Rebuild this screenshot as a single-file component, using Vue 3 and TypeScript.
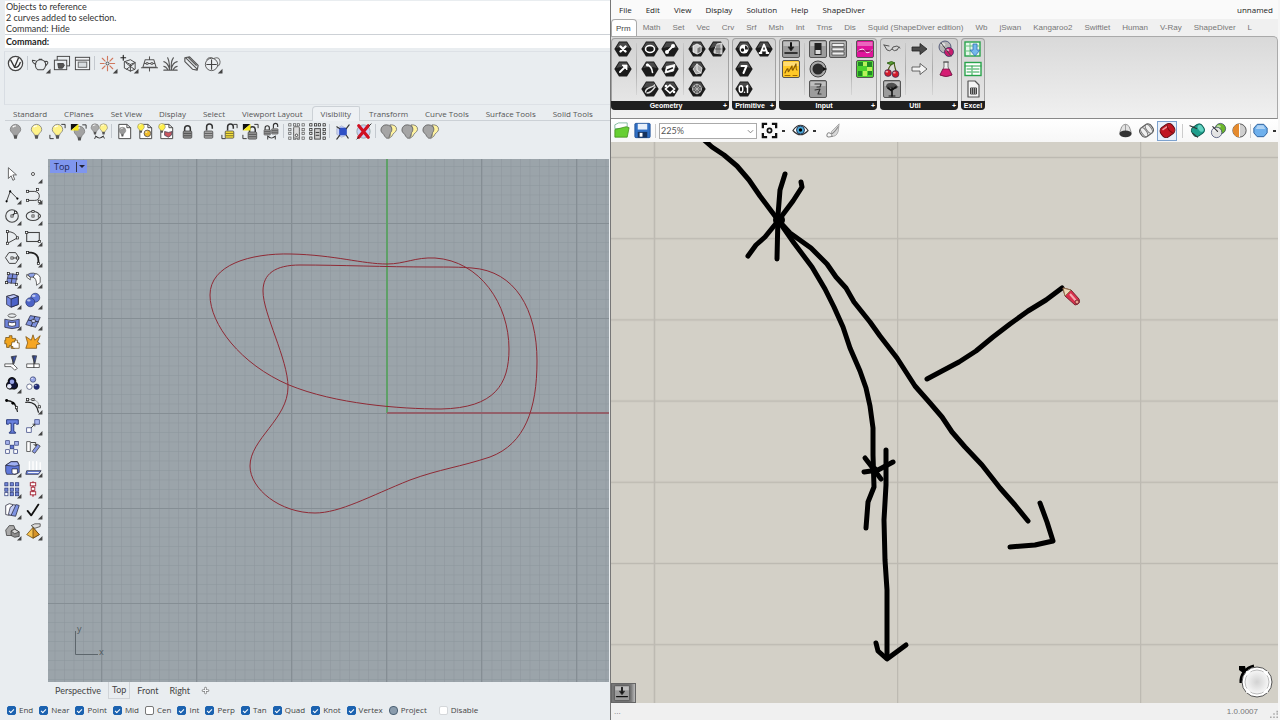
<script setup lang="ts">
import { h, ref } from 'vue'

interface Tool { name: string; more: boolean }

const hex = (glyph: string): string =>
  `<path d="M6 2.500h8l4.700 7.500-4.700 7.500H6L1.300 10z" fill="#1b1b1b"/><path d="M6.300 3.500h7.400l3 5.500q-7-2-13.400 0z" fill="#4a4a4a"/>${glyph}`
const tile = (glyph: string, fill = '#9c9c9c'): string =>
  `<rect x="1.500" y="1.500" width="17" height="17" rx="1.500" fill="${fill}" stroke="#555"/><path d="M2.500 3h15v4h-15z" fill="#fff" opacity=".35"/>${glyph}`
const bulb = (fill: string, x = 0, y = 0): string =>
  `<g transform="translate(${x} ${y})"><path d="M10 2.500a5.500 5.500 0 0 1 5.500 5.500c0 2.600-3 3.500-3.500 6H8c-.5-2.500-3.500-3.400-3.500-6A5.500 5.500 0 0 1 10 2.500z" fill="${fill}" stroke="#777" stroke-width=".8"/><path d="M7 5.500Q8.500 4 10.500 4.200" stroke="#fff" stroke-width="1.200" fill="none"/><path d="M8 14h4l-.6 3.600H8.600z" fill="#555"/></g>`
const lock = (fill: string, open = false): string =>
  `<path d="${open ? 'M8 9V5a3 3 0 0 1 6 0v2' : 'M7 10V7a3 3 0 0 1 6 0v3'}" fill="none" stroke="#333" stroke-width="1.600"/><rect x="5.500" y="9.500" width="9" height="7.500" rx="1" fill="${fill}" stroke="#444" stroke-width=".8"/><path d="M6 12h8M6 14.500h8" stroke="#222" stroke-width=".6"/>`
const brackets = '<path d="M14 2.500h4v4M2 13.500v4h4" fill="none" stroke="#333"/>'
const swap = '<path d="M2 2h8L2 9z" fill="#111"/><path d="M10 2v7H2z" fill="#f6e81c"/>'
const page = '<path d="M4 2.500h8.500L16.500 6v11.500H4z" fill="#fff" stroke="#444"/><path d="M12.500 2.500V6h4" fill="none" stroke="#444"/>'
const twoTone = '<path d="M8 3a5.500 5.500 0 0 0-6 5.500c0 3 3 3.500 4 6.500l2.500 2.500 2.500-2.500c.5-3 3-3.500 3-6.500a6 6 0 0 0-6-5.500z" fill="#a5a5a5" stroke="#555" stroke-width=".8"/><path d="M11.500 3q7-.5 7 5c-.5 3-4 3.500-5 7l-3.500 2.500q2.500-3 2-6 3.500-4-.5-8.500z" fill="#fff3a0" stroke="#666" stroke-width=".8"/>'
const node = (x: number, y: number): string =>
  `<rect x="${x - 1.2}" y="${y - 1.2}" width="2.400" height="2.400" fill="#fff" stroke="#222" stroke-width=".8"/>`
const box = (x: number, y: number, w: number, fill = '#a9b6ee'): string =>
  `<rect x="${x}" y="${y}" width="${w}" height="${w}" fill="${fill}" stroke="#2c3a7c" stroke-width=".8"/>`
const ball = (x: number, y: number, r: number, fill: string): string =>
  `<circle cx="${x}" cy="${y}" r="${r}" fill="${fill}" stroke="#28325e" stroke-width=".7"/><ellipse cx="${x - r / 3}" cy="${y - r / 2.5}" rx="${r / 2.5}" ry="${r / 4}" fill="#fff" opacity=".6"/>`
const line = (d: string, color = '#333', w = 1): string =>
  `<path d="${d}" fill="none" stroke="${color}" stroke-width="${w}" stroke-linecap="round" stroke-linejoin="round"/>`
const solid = (d: string, fill: string, stroke = '#333', w = 0.8): string =>
  `<path d="${d}" fill="${fill}" stroke="${stroke}" stroke-width="${w}" stroke-linejoin="round"/>`

const icons: Record<string, string> = {
  vray: '<circle cx="10" cy="10" r="7.500" fill="#f6f7f8" stroke="#444" stroke-width="1.300"/>' + line('M5 6.500 9 14 13 4.500M9 14q4 1 6-5', '#333', 1.4),
  teapot: line('M6 7.500q4-3 8 0c3 3 1 7-1 9H7c-3-2-3-6-1-9zM8.500 5.500h3M5 11Q1 9 1.500 6.500L4.500 7M14.500 8q4-1 3 2l-2.500 3', '#444', 1.1),
  frames: '<rect x="5.500" y="2.500" width="13" height="10" fill="#e9edf0" stroke="#444"/><rect x="2.500" y="6.500" width="13" height="10" fill="#e9edf0" stroke="#444"/>' + solid('M6 10h6l1 2-2 3H7z', '#555'),
  window: '<rect x="2.500" y="3.500" width="15" height="13" fill="#f2f4f6" stroke="#444"/><path d="M3 6.500h14" stroke="#444"/><rect x="5.500" y="8.500" width="9" height="5.500" fill="#d9dde0" stroke="#666"/>',
  sun: line('M10 2.500v4M10 13v4.500M2.500 10h4M13 10h4.500M4.500 4.500 7.500 7.500M15.500 4.500l-3 3M4.500 15.500l3-3M15.500 15.500l-3-3', '#d0775d', 1.2) + '<circle cx="10" cy="10" r="1.600" fill="#e9edf0" stroke="#444"/>',
  cubeadd: line('M2 4h5M4.500 1.500v5', '#222', 1.2) + line('M6 8l6-2 5 3v7l-5 2-6-3zM6 8l6 3 5-2M12 11v7M8 10l8 6M16 10l-8 6', '#444'),
  dome: line('M3 14 5.500 6h9L17 14zM1.500 14.500h17M10 3v3M10 14v4M5 10h10', '#555', 1.1) + '<path d="M6.500 9h2v2h-2zM11.500 9h2v2h-2z" fill="#ddd" stroke="#444" stroke-width=".7"/>',
  grass: line('M3 17h14M9 16Q7 9 3 8M9 16Q9 8 7 4M11 16Q10 8 13 4M11 16Q12 9 17 8M7 16Q5 13 3 13M13 16q2-3 4-3', '#555', 1.2),
  leaf: line('M3 4l5-1 9 9-1 5-5-1-8-8zM4 4l12 12M7 4l8 8', '#555', 1.2),
  spheres: line('M4 6q3-4 7-1 6-3 7 3 0 4-3 5', '#777', 1.1) + '<circle cx="9" cy="11" r="6.500" fill="#eceff2" stroke="#555"/>' + line('M9 6v10M4 11h10', '#444', 1.2),

  bulbOff: bulb('#a2a2a2'),
  bulbOn: bulb('#fff38a'),
  bulbSel: bulb('#fff38a') + brackets,
  bulbSwap: bulb('#a2a2a2', 1, 2) + swap + '<path d="M14 3h4v4" fill="none" stroke="#333"/>',
  bulbPair: '<g transform="scale(.75)">' + bulb('#aaa', -3, 0) + bulb('#fff38a', 9, 0) + '</g>' + line('M6 15q4 4 8 0M5 17.500l1-2.500 2 1M15 17l-1-2-2 1'),
  pageBulb: page + '<g transform="scale(.65)">' + bulb('#999', 2, 6) + '</g>',
  pageBox: page + '<g transform="scale(.65)">' + bulb('#fff04a', -2, 0) + '</g>' + ball(12, 12, 3.5, '#f0bc2a'),
  pageMesh: page + '<g transform="scale(.65)">' + bulb('#fff04a', -2, 0) + '</g>' + solid('M8 10l4 1 4-1-1 4-3 2-4-2z', '#c9565f', '#445'),
  lock: lock('#8f8f8f'),
  unlock: lock('#a9a9a9', true),
  unlockSel: lock('#f7e13c', true) + brackets,
  lockSwap: '<g transform="translate(2 1)">' + lock('#999') + '</g>' + swap + brackets,
  lockPair: '<g transform="translate(-2 1) scale(.75)">' + lock('#999') + '</g><g transform="translate(6 0) scale(.75)">' + lock('#999', true) + '</g>' + line('M6 15q4 4 8 0M6 18v-3l2 1M14 18v-3l-2 1'),
  cage: '<g opacity=".7">' + [3, 8, 12, 17].map(x => [3, 8, 12, 17].map(y => node(x, y)).join('')).join('') + '</g><rect x="7" y="5" width="6" height="12" rx="1" fill="#dcdcdc" stroke="#666"/><circle cx="10" cy="14" r="1.300" fill="#fff" stroke="#444"/>',
  cageOn: [3, 8, 12, 17].map(y => node(3, y) + node(17, y)).join('') + node(8, 3) + node(12, 3) + '<rect x="7" y="7" width="6" height="11" fill="#ccc" stroke="#444"/>' + line('M8.500 11h3M8.500 14h3'),
  blueBox: solid('M4 7l5-3 5 3v7l-5 2-5-3z', '#c9d2f8', '#a8b0c8') + '<rect x="6.500" y="6" width="8" height="8" rx="1" fill="#2f50c6"/>' + line('M14 7l3-4M7 14l-3 4M14 14l2 3M7 7 4 5', '#333', 1.2),
  redCross: '<circle cx="10" cy="10" r="7" fill="#c8d2f6" stroke="#9aa"/>' + line('M5 4l10 12M15 4 5 16', '#d01022', 3.4) + line('M16 4l2-2M5 16l-2 2', '#333'),
  twoTone,

  arrow: solid('M6 3v12l3-3 2 5 2-1-2-5h4z', '#fff'),
  point: '<circle cx="10" cy="10" r="1.700" fill="#fff" stroke="#444"/>',
  polyline: line('M4 17 8 6l8 8', '#444', 1.1) + '<circle cx="4" cy="17" r="1.200"/><circle cx="8" cy="6" r="1.200"/><circle cx="16" cy="14" r="1.200"/>',
  curve: line('M4 6h8q5 1 5 5 0 5-5 5H4', '#444', 1.1) + node(4, 6) + node(4, 16) + node(15, 4) + node(17, 17),
  circle: '<circle cx="10" cy="10" r="7" fill="none" stroke="#444" stroke-width="1.200"/>' + line('M10 10l4-4', '#222', 1.2) + node(10, 10) + node(14, 6),
  ellipse: '<ellipse cx="10" cy="10" rx="7.500" ry="5" fill="none" stroke="#444" stroke-width="1.200"/>' + node(10, 5) + node(10, 10) + node(17, 10),
  arc: line('M5 4v13l11-6M5 4q9 0 11 7', '#444', 1.1) + node(5, 4) + node(5, 17) + node(16, 11),
  rect: '<rect x="3" y="5" width="14" height="10" fill="none" stroke="#444" stroke-width="1.200"/>' + node(3, 5) + node(17, 15),
  polygon: line('M7 4h7l4 6-4 6H7l-4-6zM10 10h6', '#444', 1.1) + node(10, 10) + node(16, 10),
  fillet: line('M4 4h4q8 1 8 9v3', '#222', 2) + node(4, 4) + node(16, 16),
  surface: solid('M6 4l10 1-2 10-10-1z', '#7e90df', '#334') + line('M5 9l11 1M11 4 9 15', '#334') + node(6, 4) + node(16, 4) + node(4, 14) + node(15, 16),
  patch: solid('M4 5q7-4 13 2l-1 6q-3-6-9-5z', '#8fa2e8') + solid('M10 8q4 1 4 9l4-3V8q-2-4-5-4z', '#fff') + solid('M3 5l4 3v3L3 8z', '#fff'),
  cube: solid('M4 6l8-2 5 2v9l-8 3-5-3z', '#7286e2', '#223') + solid('M4 6l8-2 5 2-8 3z', '#bec8f8', '#223') + solid('M9 9l8-3v9l-8 3z', '#4b62c8', '#223'),
  balls: ball(12.5, 7.5, 5, '#5f77d8') + ball(7, 12.5, 5, '#4b63c6'),
  revolve: '<ellipse cx="10" cy="4" rx="4.500" ry="2" fill="none" stroke="#555"/>' + solid('M2 8q8 3 16 0v9q-8 3-16 0z', '#6e84dc', '#223') + solid('M6 11q4 2 8 0v4q-4 2-8 0z', '#fff', '#223'),
  plane: solid('M7 4l11 2-5 11L2 14z', '#7e92df', '#223') + line('M5 9l11 2M12 5 8 16', '#223') + solid('M9 8l4 1-1 3-4-1z', '#c9d1f8'),
  puzzle: solid('M3 5h4V3h3v3h4v4h2v3h-3v4h-4v-3H7v2H4v-4H2V8h1z', '#f1a51e', '#6b4a10') + solid('M10 10h3V8h3v3h2v6h-7v-2H9z', '#fff', '#6b4a10'),
  explode: solid('M2 17 4 11 2 4l6 4 2-6 2 6 6-5-3 7 3 2-4 1v4z', '#f6a623', '#754b0c'),
  trim: solid('M9 3l6-1-3 9z', '#3b52ac') + solid('M2 11h9l5 5-3 2-4-4H2z', '#fff') + line('M11 3v8'),
  split: solid('M9 2h5l-2 9z', '#3b52ac') + solid('M3 11h14v4H3z', '#fff') + line('M11 2v13'),
  join: solid('M10 3a4 4 0 0 1 4 5 4 4 0 1 1-4 7 4 4 0 1 1-4-7 4 4 0 0 1 4-5z', '#10143a', '#111', 1.4) + '<circle cx="10" cy="7.500" r="2.500" fill="#98a4e6"/><circle cx="7" cy="12.500" r="2.500" fill="#e8ebfa"/>',
  group: ball(10, 5, 3, '#9ba9e9') + ball(6, 13, 3, '#fff') + ball(14, 13, 3, '#1e2a78'),
  editPts: line('M4 5q10 0 12 12', '#222', 1.4) + '<circle cx="4" cy="5" r="1.600"/><circle cx="11" cy="8" r="1.600"/>' + node(15, 13),
  ctrlPts: line('M2 7q12-1 14 11', '#222', 1.4) + line('M3 4h8q6 2 6 9', '#888', 0.8) + node(4, 4) + node(10, 4) + node(17, 12),
  text: solid('M4 3h13v5h-2l-1-1h-2v9l2 1v1H7v-1l2-1V7H7L6 8H4z', '#6980dd', '#1c2c70', 1),
  move: box(12, 3, 5) + box(3, 12, 5, '#fff') + line('M8 12l4-4M10 8h2v2'),
  blocks: box(3, 3, 4) + box(13, 4, 4) + box(8, 8, 4, '#5d74d0') + box(3, 13, 4, '#fff') + box(12, 13, 4, '#fff'),
  rotate: solid('M3 4h4v11H3z', '#fff') + solid('M9 15l6-8 3 2-6 8z', '#8798e4') + line('M8 5h5v3M11 7l2 2 1-2'),
  boolean: solid('M3 7l6-4h7l2 4v8l-4 2H4l-1-3z', '#5f78da', '#223') + solid('M3 7l6-4h7l2 4-5 1z', '#9fb0f4', '#223') + solid('M10 11h6v5l-4 1-2-2z', '#fff', '#223'),
  project: line('M6 3v9M10 3v9M14 3v9M18 4v7', '#fff', 1.5) + solid('M3 13h16l-3 4H2z', '#6e86de', '#223') + line('M5 15h11', '#fff'),
  array: [2, 8, 14].map(x => [3, 9, 14].map(y => box(x, y, 3.5, x === 2 && y === 14 ? '#fff' : '#7286d6')).join('')).join(''),
  align: line('M10 2v16', '#b22233', 1.4) + [3, 8, 13].map(y => `<rect x="${y === 8 ? 8 : 7}" y="${y}" width="${y === 8 ? 4 : 6}" height="3.500" fill="#fff" stroke="#a22233"/>`).join(''),
  slabs: solid('M3 5l4-2 4 1-4 12-4-1z', '#fff', '#223') + solid('M10 6l5-2 3 1-4 12-5-1z', '#7e93e3', '#223') + solid('M8 7l4-3 2 1-5 11-3-1z', '#c5cdf4', '#223'),
  check: line('M4 11l4 5 8-12', '#111', 2),
  greyCubes: solid('M3 9l4-5h5l2 5-3 6H4z', '#aaa', '#333') + solid('M9 10l4-2 5 3v5l-5 1-4-2z', '#8c8c8c', '#333') + solid('M9 10l4-2 5 3-5 2z', '#d6d6d6', '#333'),
  pyramid: solid('M3 14l7-8 7 8-7 4z', '#f7c452', '#5a3f10') + solid('M10 6l7 8-7 4z', '#d6942a', '#5a3f10') + solid('M8 4l4-2h6v3l-6 2z', '#ddd'),

  hPoint: hex(line('M7.500 7.500l5 5M12.500 7.500l-5 5', '#fff', 2.4)),
  hVector: hex(line('M7 13l4-4', '#fff', 2) + solid('M9 6h5v5z', '#fff', '#fff')),
  hCircle: hex('<ellipse cx="10" cy="10" rx="4.500" ry="3.500" fill="none" stroke="#fff" stroke-width="1.600"/>'),
  hArc: hex(line('M7 5.500q5 2 5.500 8', '#fff', 1.6) + '<circle cx="7.500" cy="6" r="1.500" fill="#fff"/>'),
  hCurve: hex(line('M5.500 13q0-3 4.500-4.500T14.500 6M7 14q4 0 8-6', '#ddd', 1.4)),
  hLine: hex(line('M7 13l6-6', '#fff', 1.8) + '<circle cx="7" cy="13" r="2" fill="#fff"/><circle cx="13" cy="7" r="2" fill="#fff"/>'),
  hPlane: hex(solid('M6.500 7.500l8.500-2-1.500 6.500-8.500 2z', '#fff', '#fff') + line('M7.500 11l5-2', '#222', 1.4)),
  hRect: hex('<path d="M10 6l4.500 4-4.500 4-4.500-4z" fill="none" stroke="#fff" stroke-width="1.600"/><circle cx="6" cy="7" r="1.300" fill="#fff"/><circle cx="14" cy="13" r="1.300" fill="#fff"/>'),
  hBox: hex(solid('M6 7l4-2 4 2v6l-4 2-4-2z', '#ccc', '#fff') + solid('M10 9l4-2v6l-4 2z', '#777', '#ddd')),
  hBrep: hex(solid('M6 10l4-5 5 4-1 5-5 1z', '#aaa', '#eee') + line('M10 5v6l4 3', '#eee')),
  hMesh: hex('<circle cx="10" cy="10" r="4.500" fill="#555" stroke="#bbb"/>' + line('M7 7l6 6M13 7l-6 6M10 5v10M5.500 10h9', '#bbb', 0.8)),
  hTwisted: hex(solid('M7 12l3-7 5-1v11l-8-1z', '#bbb', '#eee') + line('M10 6v8M8 10h6M12 6v9', '#444', 0.7)),
  hBool: hex('<circle cx="10" cy="10" r="4.500" fill="#fff"/><circle cx="8.500" cy="11" r="1.700" fill="#111"/><path d="M11 6.500a4 4 0 0 1 3 4h-3z" fill="#222"/>'),
  hInt: hex(line('M7.500 7h5l-3 7', '#fff', 2)),
  hNum: hex('<ellipse cx="7" cy="10" rx="1.800" ry="3.300" fill="none" stroke="#fff" stroke-width="1.400"/><circle cx="10.500" cy="13.300" r=".8" fill="#fff"/>' + line('M12.500 8l1-1.500v7', '#fff', 1.5)),
  hText: hex(line('M6.500 14 10 5.500l3.500 8.500M8 11.500h4M5.500 14h2M12.500 14h2', '#fff', 1.8)),

  slider: tile(line('M4 14h12', '#111', 1.6) + line('M10 4v5', '#111', 2) + solid('M7 8h6l-3 4z', '#111')),
  graph: tile(line('M4 14q2-5 3-4 0 4 1 2l3-5q0 5 1 4l3-6q0 6 1 6', '#8a5c00', 1.2) + line('M4 16.500h5M12 16.500h4', '#a36c00'), '#ffc928'),
  toggle: tile('<rect x="6.500" y="4" width="7" height="12" fill="#222"/><rect x="7.500" y="11" width="5" height="4" fill="#ddd"/>'),
  list: tile('<path d="M4 4.500h12v3H4zM4 8.800h12v3H4zM4 13h12v3H4z" fill="#eee" stroke="#444" stroke-width=".7"/>'),
  knob: '<circle cx="10" cy="10" r="8" fill="#aaa" stroke="#444"/><circle cx="10" cy="10" r="5.500" fill="#2b2b2b"/><path d="M15 8l4 2-4 2z" fill="#111"/>',
  digits: tile(line('M7 5h6l-1 3H9M7 11l5-1-2 5h3', '#333', 1.2)),
  pink: tile(line('M3 12q5-4 7 0t7-1', '#fff') + '<path d="M3 12h14" stroke="#700a45"/>', '#e0149b'),
  pixels: tile('<path d="M3 3h5v4H3zM12 3h5v5h-5zM3 12h4v5H3zM13 12h4v4h-4z" fill="#1f8a25"/><path d="M8 3h4v4H8zM12 8h5v4h-5zM8 12h4v5H8z" fill="#b8f25b"/>', '#4cd22f'),
  glasses: line('M2 6l3 5q3 2 5-1 2 3 5 1M2 6l5 1M10 10l1-2 4-1 3 2M15 11l2-3', '#555', 1),
  cherries: line('M6 12q1-6 6-8 1 5 2 8', '#4b5a18', 1.2) + solid('M5 4q5-3 8 0-5 3-8 0z', '#5ba331', '#2d5b16') + ball(6, 14, 3.4, '#d31a2b') + ball(13.5, 15, 3.4, '#d31a2b'),
  tree: tile('<path d="M4 8q0-4 4-4 5-1 8 4l-2 2-4-1-4 1z" fill="#333" opacity=".8"/>' + line('M10 17V9M10 12 6 9M10 11l4-3', '#111', 1.6) + line('M7 17h6', '#111', 1), '#9a9a9a'),
  arrowFull: solid('M3 8h8V4.500l7 5.500-7 5.500V12H3z', '#4a4a4a', '#222'),
  arrowOpen: solid('M3 8h8V4.500l7 5.500-7 5.500V12H3z', '#f3f3f3', '#444'),
  colorBalls: ball(9, 8, 6, '#b5b5b5') + ball(13, 13, 4.5, '#c71d6d') + line('M5 4l10 13', '#444'),
  flask: solid('M8 3h4v5l4 8q-6 3-12 0l4-8z', '#eee', '#555') + solid('M7 10h6l3 6q-6 3-12 0z', '#d51d74', '#7b1044') + line('M7.500 3h5', '#555'),
  xlIn: '<rect x="2" y="3" width="15" height="14" fill="#e6f6ea" stroke="#28a34b" stroke-width="1.400"/>' + line('M2 7h15M2 12h15M7 3v14', '#66c27e') + solid('M10 5h4v6h3l-5 6-5-6h3z', '#74b8ec', '#2f71b3'),
  xlGrid: '<rect x="2" y="3.500" width="16" height="13" fill="#fff" stroke="#28a34b" stroke-width="1.400"/>' + line('M2 7h16M4 10h4M10 10h6M4 13h4M10 13h6', '#28a34b') + line('M9 7v9', '#28a34b'),
  sheet: solid('M5 2h7l4 4v12H5z', '#f4f4f4', '#555', 1.2) + '<path d="M7.500 9h6v6h-6zM9.500 9v6M11.500 9v6M7.500 11h6M7.500 13h6" fill="none" stroke="#444"/>',

  open: solid('M3 4l4-2h9v6H3z', '#fff', '#6a8') + solid('M3 9l12-3 3 1-2 10H3z', '#67cf32', '#3f8c1a'),
  save: '<rect x="2" y="2.500" width="16" height="15" rx="1" fill="#2f6fc4" stroke="#24549a"/><rect x="5" y="3" width="10" height="6" fill="#e8f0fa"/><rect x="5" y="11.500" width="10" height="6" fill="#16335e"/><rect x="7" y="12.500" width="3" height="4" fill="#fff"/>',
  focus: '<path d="M3 7.500V3h4.500M12.500 3H17v4.500M17 12.500V17h-4.500M7.500 17H3v-4.500" fill="none" stroke="#111" stroke-width="2.400"/><circle cx="10" cy="10" r="2.200" fill="#fff" stroke="#111" stroke-width="1.800"/>',
  eye: solid('M2 10q8-11 16 0-8 9-16 0z', '#fff', '#333', 1.2) + '<circle cx="10" cy="9.500" r="4.200" fill="#4ba9d8" stroke="#235"/><circle cx="10" cy="9.500" r="1.800"/>',
  sketch: solid('M9 11 17 3l-1 8q-2 6-7 5z', '#d8d8d8', '#999') + line('M10 16q-6 2-6-1 1-4 4-2 2 2 8-7', '#888', 1.1),
  pvOff: solid('M6 6q4-5 8 0l2 6H4z', '#e3e3e3', '#777') + line('M10 4v6', '#999') + '<ellipse cx="10" cy="13.500" rx="6.500" ry="3.500" fill="#333"/>',
  pvWire: '<g transform="rotate(-35 10 10)"><rect x="3" y="4.500" width="14" height="11" rx="4" fill="#f0f0f0" stroke="#555" stroke-width="1.200"/><ellipse cx="7" cy="10" rx="2.500" ry="5.500" fill="none" stroke="#777"/><ellipse cx="13" cy="10" rx="2.500" ry="5.500" fill="none" stroke="#777"/></g>',
  pvShade: '<g transform="rotate(-35 10 10)"><rect x="2.500" y="4" width="15" height="12" rx="4.500" fill="#c01722" stroke="#5b070c"/><path d="M6 6.500h7" stroke="#f29a9e" stroke-width="1.500"/><path d="M13 5q-3 5 0 10" stroke="#7d0b12" fill="none"/></g>',
  pvTeal: '<g transform="rotate(-35 10 10)"><rect x="4" y="4.500" width="13" height="11" rx="4" fill="#1f9e8c" stroke="#0e5b50"/><ellipse cx="14" cy="10" rx="2.500" ry="4" fill="#64d3c2"/></g>' + line('M2 5l7 3M5 13l5 4', '#333', 1.2),
  pvGreen: ball(12, 8, 5.5, '#6cb72c') + ball(8, 12, 5.5, '#e4e4e4') + line('M4 6l5 5', '#333', 1.2),
  pvHalf: '<circle cx="10" cy="10" r="7" fill="#cfcfcf" stroke="#555"/><path d="M10 3a7 7 0 0 0 0 14z" fill="#e58a2d"/><path d="M10 3v14" stroke="#fff"/>',
  pvBlue: solid('M6.500 3.500h7l3.500 4v5l-3.500 4h-7l-3.500-4v-5z', '#6fb0ec', '#2b5f9c', 1) + '<path d="M7 4.500h6l2 4h-10z" fill="#fff" opacity=".45"/>',
  gem: line('M10 4v12M4 10h12', '#777', 5) + line('M10 4.500v11M4.500 10h11', '#f4f6f8', 2.4),
}

const Icon = (p: { name: string; more?: boolean }) =>
  h('svg', {
    class: 'ic',
    viewBox: '0 0 20 20',
    'aria-hidden': 'true',
    innerHTML: icons[p.name] + (p.more ? '<path d="M20.500 15.500v5h-5z" fill="#444"/>' : ''),
  })
Icon.props = { name: String, more: Boolean }

// A trailing "+" marks a tool that opens a flyout.
const tools = (names: string): Tool[] =>
  names.split(' ').map(n => ({ name: n.replace('+', ''), more: n.endsWith('+') }))

const renderTools = ['vray', 'teapot+ frames window', 'sun+ cubeadd+ dome grass leaf spheres+'].map(tools)
const visibilityTools = [
  'bulbOff bulbOn bulbSel bulbSwap bulbPair',
  'pageBulb pageBox pageMesh lock unlock unlockSel lockSwap lockPair',
  'cage cageOn', 'blueBox redCross', 'twoTone twoTone twoTone',
].map(tools)
const sideTools = tools(
  'arrow point+ polyline+ curve+ circle+ ellipse+ arc+ rect+ polygon+ fillet+ surface+ patch+ cube+ balls+ revolve+ plane+ ' +
  'puzzle explode trim split join+ group editPts ctrlPts+ text move+ blocks rotate boolean+ project+ array+ align+ slabs+ check+ greyCubes+ pyramid+',
)
const toolTabs = ['Standard', 'CPlanes', 'Set View', 'Display', 'Select', 'Viewport Layout', 'Visibility', 'Transform', 'Curve Tools', 'Surface Tools', 'Solid Tools']
const toolTab = ref('Visibility')
const viewTabs = ['Perspective', 'Top', 'Front', 'Right']
const viewTab = ref('Top')
const snaps = ref(['End', 'Near', 'Point', 'Mid', 'Cen', 'Int', 'Perp', 'Tan', 'Quad', 'Knot', 'Vertex']
  .map(label => ({ label, on: label !== 'Cen' })))
const project = ref(false)
const disable = ref(false)

const menus = ['File', 'Edit', 'View', 'Display', 'Solution', 'Help', 'ShapeDiver']
const tabs = ['Prm', 'Math', 'Set', 'Vec', 'Crv', 'Srf', 'Msh', 'Int', 'Trns', 'Dis', 'Squid (ShapeDiver edition)', 'Wb', 'jSwan', 'Kangaroo2', 'Swiftlet', 'Human', 'V-Ray', 'ShapeDiver', 'L']
const tab = ref('Prm')
const groups = [
  { title: 'Geometry', more: true, sets: [[['hPoint', 'hVector']], [['hCircle', 'hArc', 'hCurve'], ['hLine', 'hPlane', 'hRect']], [['hBox', 'hBrep', 'hMesh'], ['hTwisted']]] },
  { title: 'Primitive', more: true, sets: [[['hBool', 'hInt', 'hNum'], ['hText']]] },
  { title: 'Input', more: true, sets: [[['slider', 'graph']], [['toggle', 'knob', 'digits'], ['list']], [['pink', 'pixels']]] },
  { title: 'Util', more: true, sets: [[['glasses', 'cherries', 'tree']], [['arrowFull', 'arrowOpen']], [['colorBalls', 'flask']]] },
  { title: 'Excel', more: false, sets: [[['xlIn', 'xlGrid', 'sheet']]] },
]
const strokes = [
  'M703 139L712 147L724 155L737 166L749 180L760 196L769 208L778 220L790 233L811 248L827 264L836 277L846 288L854 302L870 322L880 336L897 358L915 386L930 403L942 417L952 432L965 447L982 465L1000 488L1015 505L1028 521',
  'M1040 503L1047 522L1053 541L1035 545L1010 547',
  'M778 220L794 243L812 267L825 289L834 307L843 327L850 348L860 371L866 388L870 406L873 428L873 455L874 487L868 502L866 528',
  'M785 174L780 190L778 215L777 259',
  'M801 182L802 187L793 201L778 221L765 237L756 245L748 256',
  'M865 458L872 467L881 479',
  'M864 472L878 470L893 462',
  'M886 450L886 485L884 520L885 560L887 590L887 655',
  'M876 643L878 651L887 659L906 645',
  'M927 379L942 371L959 362L976 351L993 337L1010 324L1028 311L1046 300L1062 288',
]
</script>

<template>
  <div class="desk">
    <section class="rhino">
      <div class="console">
        <p>Objects to reference</p>
        <p>2 curves added to selection.</p>
        <p>Command: Hide</p>
      </div>
      <div class="prompt">
        <label for="cmd">Command:</label>
        <input id="cmd" type="text" autocomplete="off">
      </div>
      <div class="bar render">
        <div v-for="(set, i) in renderTools" :key="i" class="set">
          <button v-for="t in set" :key="t.name" type="button" :aria-label="t.name"><Icon :name="t.name" :more="t.more" /></button>
        </div>
      </div>
      <nav class="tool-tabs">
        <button v-for="t in toolTabs" :key="t" type="button" :class="{ on: t === toolTab }" @click="toolTab = t">{{ t }}</button>
      </nav>
      <div class="bar visibility">
        <div v-for="(set, i) in visibilityTools" :key="i" class="set">
          <button v-for="(t, j) in set" :key="j" type="button" :aria-label="t.name"><Icon :name="t.name" :more="t.more" /></button>
        </div>
      </div>
      <div class="work">
        <div class="side">
          <button v-for="t in sideTools" :key="t.name" type="button" :aria-label="t.name"><Icon :name="t.name" :more="t.more" /></button>
        </div>
        <div class="view-col">
          <div class="viewport">
            <svg class="fill">
              <defs>
                <pattern id="minor" x="54" y="64" width="9.500" height="9.500" patternUnits="userSpaceOnUse">
                  <path d="M0 0H9.500M0 0V9.500" stroke="#8c959c" stroke-width="1" fill="none" />
                </pattern>
                <pattern id="major" x="53" y="63" width="95" height="95" patternUnits="userSpaceOnUse">
                  <path d="M0 1.500H95M0.500 0V95" stroke="#858e94" stroke-width="1" fill="none" />
                </pattern>
              </defs>
              <rect width="100%" height="100%" fill="url(#minor)" />
              <rect width="100%" height="100%" fill="url(#major)" />
              <rect class="axis-y" x="338" y="0" width="2" height="254" />
              <rect class="axis-x" x="339" y="253" width="100%" height="2" />
              <g transform="translate(-48 -160)" fill="none">
                <g stroke="#8f2a35">
                  <path d="M210 296C210 266 250 254 291 255C335 256 362 265 387 265C405 265 415 258 435 259C480 262 509 305 509 350C509 385 495 409 441 410C400 410 335 405 289 386C240 365 210 325 210 296Z" />
                  <path d="M263 292C263 275 275 266 300 266C340 266 385 268 430 268C450 268 460 268 472 269C515 272 537 310 537 362C537 410 525 445 490 458C460 468 440 470 410 481C370 497 340 514 315 514C280 514 250 490 250 467C250 440 288 420 288 388C288 360 263 315 263 292Z" />
                </g>
                <path d="M75.500 632V655.500H98" stroke="#5d666c" />
              </g>
              <text x="29" y="473">y</text>
              <text x="51" y="496">x</text>
            </svg>
            <button class="view-name" type="button">Top<i></i><b></b></button>
          </div>
          <nav class="view-tabs">
            <button v-for="t in viewTabs" :key="t" type="button" :class="{ on: t === viewTab }" @click="viewTab = t">{{ t }}</button>
            <button type="button" aria-label="Add view"><Icon name="gem" /></button>
          </nav>
        </div>
      </div>
      <div class="snaps">
        <label v-for="s in snaps" :key="s.label"><input v-model="s.on" type="checkbox">{{ s.label }}</label>
        <label class="project"><input v-model="project" type="checkbox">Project</label>
        <label class="disable"><input v-model="disable" type="checkbox">Disable</label>
      </div>
    </section>

    <section class="gh">
      <header class="menu">
        <button v-for="m in menus" :key="m" type="button">{{ m }}</button>
        <span class="doc">unnamed</span>
      </header>
      <nav class="tabs">
        <button v-for="t in tabs" :key="t" type="button" :class="{ on: t === tab }" @click="tab = t">{{ t }}</button>
      </nav>
      <div class="ribbon">
        <div v-for="g in groups" :key="g.title" class="group">
          <div class="sets">
            <div v-for="(s, i) in g.sets" :key="i" class="gset">
              <div v-for="(col, j) in s" :key="j" class="gcol">
                <button v-for="n in col" :key="n" type="button" :aria-label="n"><Icon :name="n" /></button>
              </div>
            </div>
          </div>
          <div class="title" :class="{ more: g.more }"><span>{{ g.title }}</span><em v-if="g.more">+</em></div>
        </div>
      </div>
      <div class="tools">
        <button type="button" aria-label="Open"><Icon name="open" /></button>
        <button type="button" aria-label="Save"><Icon name="save" /></button>
        <span class="rule"></span>
        <span class="zoom">
          <select aria-label="Zoom"><option>225%</option></select>
          <svg viewBox="0 0 8 5"><path d="M1 1l3 3 3-3" fill="none" stroke="#777" /></svg>
        </span>
        <button type="button" class="drop" aria-label="Focus"><Icon name="focus" /><i></i></button>
        <button type="button" class="drop" aria-label="Preview"><Icon name="eye" /><i></i></button>
        <button type="button" aria-label="Sketch"><Icon name="sketch" /></button>
        <span class="grow"></span>
        <button type="button" aria-label="No preview"><Icon name="pvOff" /></button>
        <button type="button" aria-label="Wireframe"><Icon name="pvWire" /></button>
        <button type="button" class="active" aria-label="Shaded"><Icon name="pvShade" /></button>
        <span class="rule wide"></span>
        <button type="button" aria-label="Selected only"><Icon name="pvTeal" /></button>
        <button type="button" aria-label="Filter"><Icon name="pvGreen" /></button>
        <button type="button" aria-label="Material"><Icon name="pvHalf" /></button>
        <span class="rule slim"></span>
        <button type="button" class="drop" aria-label="Mesh quality"><Icon name="pvBlue" /><i></i></button>
      </div>
      <div class="canvas">
        <svg class="fill">
          <defs>
            <pattern id="cells" x="42" y="14" width="243" height="81.200" patternUnits="userSpaceOnUse">
              <path d="M0 1.500H243M1.500 0V82" stroke="#bdbab2" stroke-width="1.600" fill="none" />
            </pattern>
          </defs>
          <rect width="100%" height="100%" fill="url(#cells)" />
          <g transform="translate(-611 -142)">
            <path v-for="d in strokes" :key="d" :d="d" fill="none" stroke="#000" stroke-width="5" stroke-linecap="round" stroke-linejoin="round" />
            <circle cx="779" cy="220" r="6" />
            <circle cx="874" cy="470" r="4" />
            <g stroke-linejoin="round">
              <path d="M1063 288L1071 290L1079 299Q1081 304 1075 305L1065 296Z" fill="#d8304c" stroke="#7a2430" />
              <path d="M1063 288L1071 290L1065 296Z" fill="#ecd9b8" stroke="#8d7350" />
              <path d="M1070 294L1077 302" stroke="#f5a9b0" stroke-width="2" />
              <circle cx="1077" cy="302" r="2" fill="#e9a08c" stroke="#7a2430" />
            </g>
          </g>
        </svg>
        <button class="markov" type="button" aria-label="Slider"><Icon name="slider" /></button>
        <svg class="compass" viewBox="0 0 36 36">
          <defs><radialGradient id="dial"><stop offset="0" stop-color="#d2d2d2" /><stop offset="1" stop-color="#f7f7f7" /></radialGradient></defs>
          <path d="M4 20A16 16 0 0 1 17 3" fill="none" stroke="#000" stroke-width="3" />
          <path d="M2 3h6l1 4-3 3-4-3z" />
          <circle cx="20" cy="19" r="15" fill="#fff" stroke="#555" />
          <circle cx="20" cy="19" r="12" fill="url(#dial)" stroke="#bbb" />
          <path d="M9 8l5 1-4 4zM31 8l-5 1 4 4zM9 30l5-1-4-4zM31 30l-5-1 4-4z" fill="#fff" />
        </svg>
      </div>
      <footer class="status">
        <span>...</span><span class="version">1.0.0007</span>
        <svg class="grip" viewBox="0 0 10 10"><path d="M8 1h2v2H8zM8 4h2v2H8zM8 8h2v2H8zM4 4h2v2H4zM4 8h2v2H4zM0 8h2v2H0z" fill="#aaa" /></svg>
      </footer>
    </section>
  </div>
</template>

<style>
body { margin: 0; background: #e9edf0; }
</style>

<style scoped>
.desk { display: grid; grid-template-columns: 610fr 670fr; height: 100vh; min-height: 700px; overflow: hidden; font: 8px/12px "Open Sans", "Noto Sans", sans-serif; color: #444; }
button { display: flex; align-items: center; justify-content: center; padding: 0; border: 0; background: none; font: inherit; color: inherit; white-space: nowrap; }
.ic { display: block; width: 20px; height: 20px; flex: none; overflow: visible; }
.fill { display: block; width: 100%; height: 100%; }

.rhino { display: flex; flex-direction: column; min-width: 0; background: #e9edf0; overflow: hidden; }
.console, .prompt { font: 9px/11px Lato, "Open Sans", sans-serif; }
.console { margin: 1px 0 0 5px; height: 33px; background: #fff; border-bottom: 1px solid #cdd1d6; color: #333; }
.console p { margin: 0; padding-left: 1px; }
.prompt { display: flex; align-items: center; height: 13px; margin-left: 5px; padding-left: 1px; background: #fff; color: #222; font-weight: 700; }
.prompt input { flex: 1; min-width: 0; height: 11px; margin: 0 4px; padding: 0; border: 0; outline: 0; background: none; font: inherit; }
.bar { display: flex; padding-left: 5px; }
.bar .set { display: flex; }
.bar .set + .set::before { content: ""; width: 1px; height: 14px; margin: 3px 2px 0 1px; background: #c4c9cf; }
.bar button { width: 21px; height: 20px; }
.bar .ic { width: 19px; height: 19px; }
.render { height: 51px; margin: 3px 0 0 4px; padding: 1px 0 0; border-top: 1px solid #dde1e6; border-left: 1px solid #d8dde3; border-bottom: 1px solid #dde1e6; }
.tool-tabs { display: flex; gap: 1px; height: 14px; margin-left: 5px; padding-top: 1px; border-bottom: 1px solid #ccd1d6; }
.tool-tabs button { height: 15px; padding: 0 8px; color: #555; }
.tool-tabs button.on { border: 1px solid #ccd1d6; border-bottom: 0; border-radius: 4px 2px 0 0; background: #eef1f4; padding: 0 8px; }
.visibility { height: 38px; }
.work { display: flex; flex: 1; min-height: 0; }
.side { display: grid; grid-template-columns: 21px 21px; grid-auto-rows: 21px; width: 44px; padding: 4px 3px 0 1px; align-content: start; }
.side .ic { width: 18px; height: 18px; }
.view-col { display: flex; flex-direction: column; flex: 1; min-width: 0; }
.viewport { position: relative; flex: 1; min-height: 0; margin-right: 1px; background: #9ba4aa; overflow: hidden; }
.viewport text { font-size: 9px; fill: #4f585e; }
.axis-y { fill: #5fa068; }
.axis-x { fill: #93606a; }
.view-name { position: absolute; left: 2px; top: 1px; height: 13px; padding: 0 2px 0 4px; background: #7f96ee; color: #1c2554; font-size: 9px; }
.view-name i { width: 1px; height: 10px; margin: 0 2px 0 6px; background: #334; }
.view-name b { border: 3px solid transparent; border-top: 3px solid #223; border-bottom: 0; }
.view-tabs { display: flex; height: 18px; gap: 11px; padding-left: 7px; font: 9px/12px Lato, "Open Sans", sans-serif; }
.view-tabs button { height: 17px; }
.view-tabs button.on { margin: 0 -4px; padding: 0 3px; border: 1px solid #d0d4d8; border-top: 0; }
.view-tabs .ic { width: 9px; height: 9px; }
.snaps { display: flex; align-items: center; height: 20px; gap: 6px; padding-left: 7px; }
.snaps label { display: flex; align-items: center; gap: 3px; white-space: nowrap; }
.snaps input { appearance: none; width: 9px; height: 9px; margin: 0; border: 1px solid #777; border-radius: 2px; background: #fff; display: grid; place-items: center; }
.snaps input:checked { border-color: #1b62b0; background: #1b62b0; }
.snaps input:checked::after { content: ""; width: 4px; height: 2px; border-left: 1px solid #fff; border-bottom: 1px solid #fff; transform: rotate(-45deg); }
.snaps .project input { border-radius: 4px; background: #8a9cad; border-color: #4d6275; }
.snaps .disable { margin-left: 6px; }
.snaps .disable input { border-color: #d4d7da; }

.gh { display: flex; flex-direction: column; min-width: 0; overflow: hidden; background: #f0f0f0; border-left: 1px solid #777; border-right: 2px solid #f6f6f6; }
.menu { display: flex; align-items: center; height: 19px; gap: 14px; padding: 0 5px 0 8px; background: #fafafa; color: #222; }
.doc { margin-left: auto; }
.tabs { display: flex; height: 17px; font: 8px/12px "Liberation Sans", sans-serif; color: #777; overflow: hidden; }
.tabs button { padding: 0 6px; height: 17px; }
.tabs button.on { height: 18px; padding: 0 5px 0 4px; border: 1px solid #aaa; border-bottom: 0; border-radius: 4px 4px 0 0; background: #fff; color: #444; }
.ribbon { display: flex; gap: 3px; height: 80px; padding: 1px 0 0; border: 1px solid #aaa; border-left: 0; border-bottom: 1px solid #888; border-radius: 0 5px 0 0; background: linear-gradient(#d9d9d9, #f0f0f0); box-sizing: content-box; }
.group { display: flex; flex-direction: column; height: 72px; border-radius: 4px; background: linear-gradient(#d2d2d2, #e8e8e8); box-shadow: inset 0 0 0 1px #a2a2a2; overflow: hidden; }
.sets { display: flex; flex: 1; padding: 1px 2px 0; }
.gset { display: flex; }
.gset + .gset::before { content: ""; width: 1px; height: 52px; margin: 4px 3px 0; background: linear-gradient(#c8c8c8, #aaa, #d5d5d5); }
.gcol { display: flex; flex-direction: column; }
.gcol button { width: 20px; height: 20px; }
.title { display: flex; align-items: center; justify-content: center; position: relative; height: 9px; background: #1f1f1f; color: #fff; font: 700 7px/9px "Liberation Sans", sans-serif; }
.title.more { padding-right: 8px; }
.title em { position: absolute; right: 2px; font-style: normal; }
.tools { display: flex; align-items: center; height: 23px; padding: 0 1px 0 0; background: linear-gradient(#fff, #f7f7f7); }
.tools button { width: 20px; height: 20px; flex: none; margin-right: 1px; }
.tools .drop { width: 26px; margin-right: 5px; }
.tools .drop:last-child { margin-right: 0; }
.tools .ic { width: 19px; height: 19px; }
.drop i { width: 3px; height: 2px; margin: 0 1px 0 3px; background: #333; }
.tools .active { background: #e8f0fa; box-shadow: inset 0 0 0 1px #7da2ce; }
.rule { width: 1px; height: 14px; margin: 0 3px 0 2px; background: #ccc; }
.rule.wide { margin: 0 4px; }
.rule.slim { margin: 0; }
.grow { flex: 1; }
.zoom { position: relative; width: 98px; margin-right: 3px; }
.zoom select { display: block; appearance: none; width: 100%; height: 16px; padding: 0 1px; border: 1px solid #aaa; border-radius: 0; background: #fff; color: #555; font: 9px/12px Lato, "Open Sans", sans-serif; }
.zoom svg { position: absolute; right: 3px; top: 6px; width: 7px; height: 5px; }
.canvas { position: relative; flex: 1; min-height: 0; background: #d3d0c7; overflow: hidden; }
.markov { position: absolute; left: 0; bottom: 0; width: 25px; height: 20px; padding-right: 4px; background: linear-gradient(90deg, #777 80%, #ccc); box-shadow: inset 0 0 0 1px #666; }
.markov .ic { width: 18px; height: 18px; }
.compass { position: absolute; right: 5px; bottom: 4px; width: 36px; height: 36px; }
.status { display: flex; align-items: center; height: 17px; gap: 12px; padding: 0 0 0 3px; font: 8px/12px "Liberation Sans", sans-serif; color: #777; }
.version { margin-left: auto; }
.grip { width: 8px; height: 8px; align-self: flex-end; margin-bottom: 2px; }
</style>
